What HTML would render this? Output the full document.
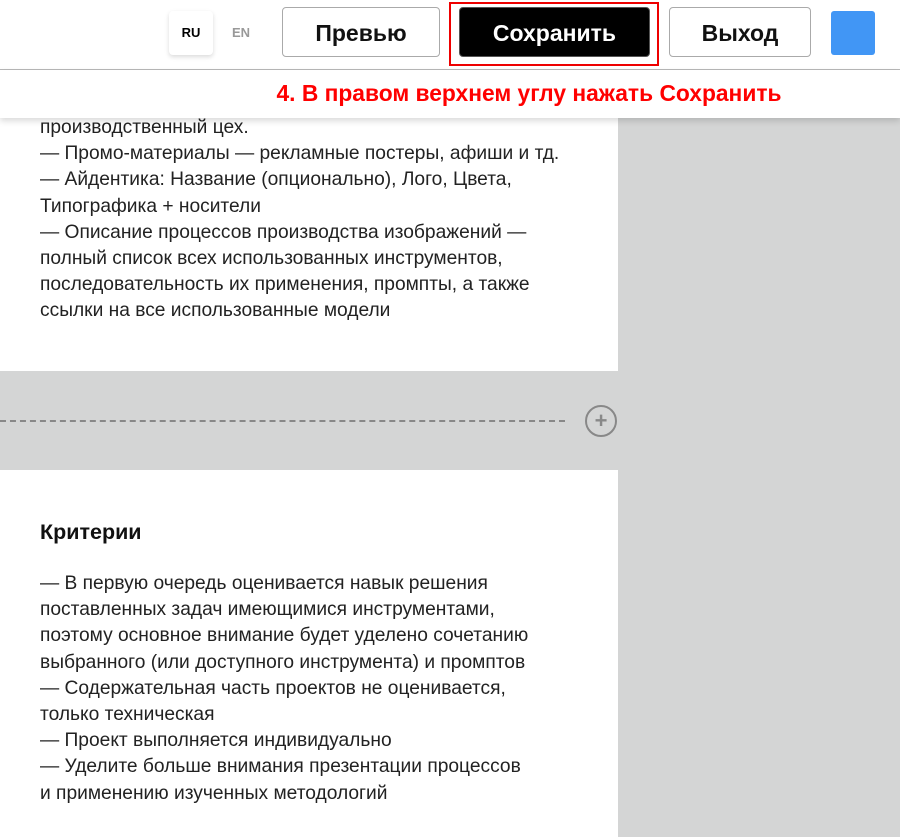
<!DOCTYPE html><html><head><meta charset="utf-8"><style>
body{margin:0;width:900px;height:837px;overflow:hidden;background:#d4d5d5;font-family:"Liberation Sans",sans-serif;position:relative}
.w{position:absolute;left:0;width:618px;background:#fff}
.t{position:absolute;left:40px;font-size:19.2px;line-height:26.2px;color:#222}
.hdr{position:absolute;left:0;top:0;width:900px;height:69px;background:#fff;border-bottom:1px solid #b8b8b8}
.ban{position:absolute;left:0;top:70px;width:900px;height:48px;background:#fff;box-shadow:0 3px 6px rgba(0,0,0,.15);color:#f00;font-weight:bold;font-size:22.8px;text-align:center;line-height:46px;text-indent:158px}
.b{position:absolute;top:7px;height:50px;border:1px solid #aaa;border-radius:4px;background:#fff;font-size:23px;font-weight:bold;text-align:center;line-height:50px;box-sizing:border-box;color:#111}
</style></head><body>
<div class="w" style="top:118px;height:253px"></div>
<div class="w" style="top:470px;height:367px"></div>
<div class="t" style="top:115px">производственный цех.<br>— Промо-материалы — рекламные постеры, афиши и тд.<br>— Айдентика: Название (опционально), Лого, Цвета,<br>Типографика + носители<br>— Описание процессов производства изображений —<br>полный список всех использованных инструментов,<br>последовательность их применения, промпты, а также<br>ссылки на все использованные модели</div>
<div style="position:absolute;left:0;top:420px;width:565px;border-top:2px dashed #888"></div>
<div style="position:absolute;left:585px;top:405px;width:32px;height:32px;border:2px solid #888;border-radius:50%;box-sizing:border-box;color:#888;font-size:22px;font-weight:bold;line-height:27px;text-align:center">+</div>
<div class="t" style="top:519px;font-size:21.5px;font-weight:bold;color:#111">Критерии</div>
<div class="t" style="top:571px">— В первую очередь оценивается навык решения<br>поставленных задач имеющимися инструментами,<br>поэтому основное внимание будет уделено сочетанию<br>выбранного (или доступного инструмента) и промптов<br>— Содержательная часть проектов не оценивается,<br>только техническая<br>— Проект выполняется индивидуально<br>— Уделите больше внимания презентации процессов<br>и применению изученных методологий</div>
<div class="hdr"></div>
<div style="position:absolute;left:169px;top:11px;width:44px;height:44px;background:#fff;border-radius:4px;box-shadow:0 2px 5px rgba(0,0,0,.15);font-size:13px;font-weight:bold;text-align:center;line-height:44px">RU</div>
<div style="position:absolute;left:219px;top:11px;width:44px;height:44px;font-size:13px;font-weight:bold;color:#999;text-align:center;line-height:44px">EN</div>
<div class="b" style="left:282px;width:158px">Превью</div>
<div style="position:absolute;left:449px;top:2px;width:210px;height:64px;border:2px solid #e00;box-sizing:border-box"></div>
<div class="b" style="left:459px;width:191px;background:#000;color:#fff;border-color:#555">Сохранить</div>
<div class="b" style="left:669px;width:142px">Выход</div>
<div style="position:absolute;left:831px;top:11px;width:44px;height:44px;background:#4196f5;border-radius:3px"></div>
<div class="ban">4. В правом верхнем углу нажать Сохранить</div>
</body></html>
